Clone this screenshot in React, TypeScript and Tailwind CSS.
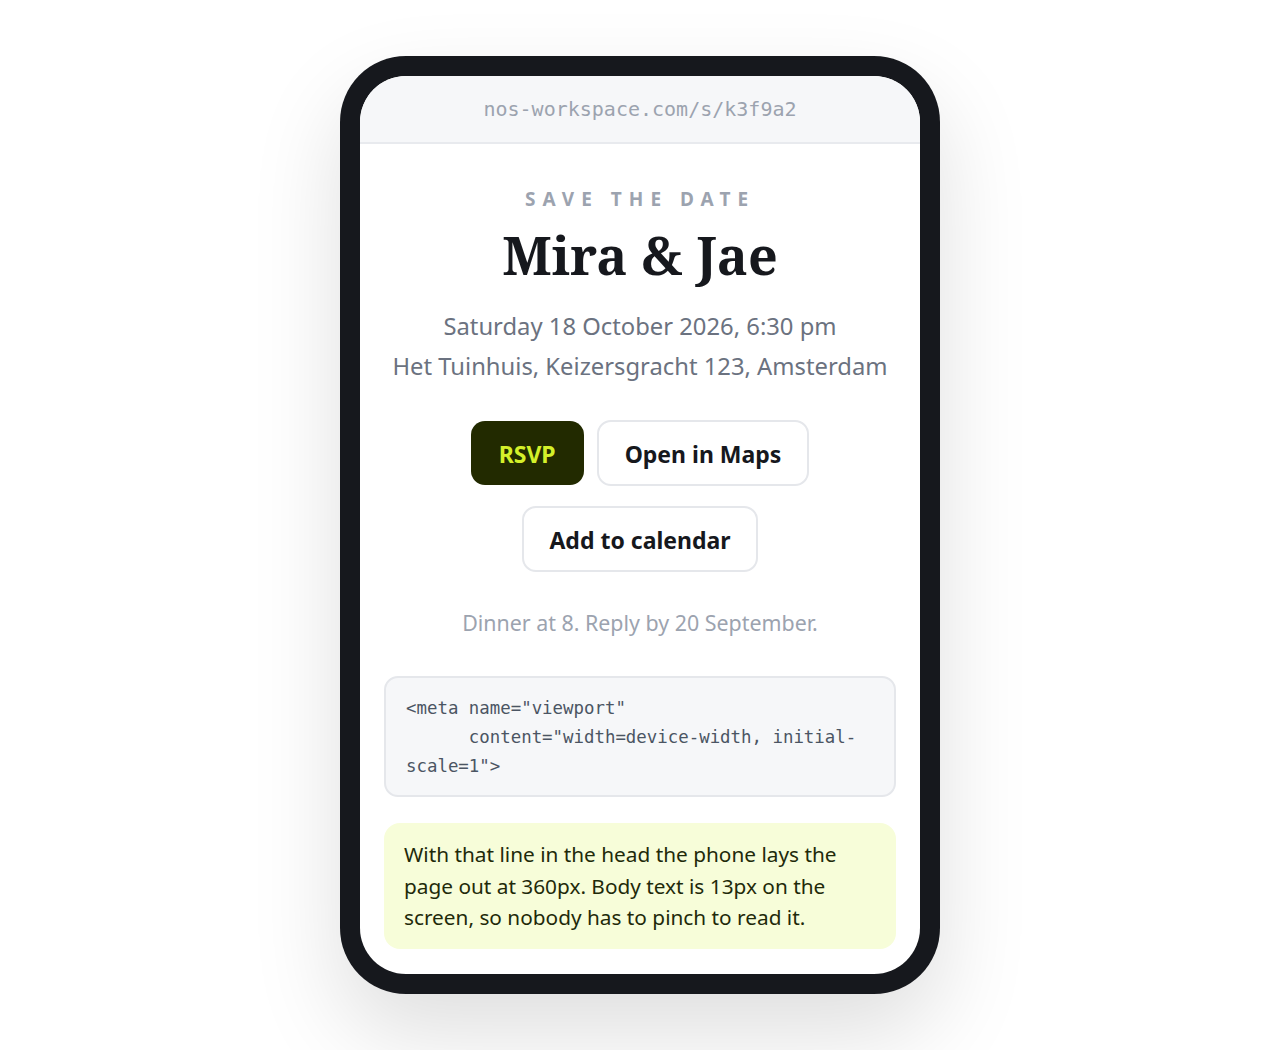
import React from "react";

export default function App() {
  return (
    <div className="min-h-screen w-full bg-white flex justify-center pt-[56px] font-['Noto_Sans',sans-serif]">
      <div className="w-[600px] h-[938px] rounded-[66px] bg-[#16181d] p-[20px] shadow-[0_40px_90px_rgba(0,0,0,0.13)]">
        <div className="h-full rounded-[46px] bg-white overflow-hidden flex flex-col">
          <div className="h-[68px] shrink-0 bg-[#f6f7f9] border-b-2 border-[#e8eaee] flex items-center justify-center">
            <span className="font-['DejaVu_Sans_Mono',monospace] text-[20px] text-[#9ca3af]">
              nos-workspace.com/s/k3f9a2
            </span>
          </div>
          <div className="px-[24px] flex flex-col items-center">
            <div className="mt-[43px] text-[19px] leading-[24px] font-bold tracking-[0.37em] text-[#9ca3af]">
              SAVE THE DATE
            </div>
            <h1 className="mt-[15px] font-['Noto_Serif','DejaVu_Serif',serif] font-bold text-[52px] leading-[57px] text-[#16181d]">
              Mira &amp; Jae
            </h1>
            <div className="mt-[23px] text-center text-[23.8px] leading-[40px] text-[#6b7280]">
              <div>Saturday 18 October 2026, 6:30 pm</div>
              <div>Het Tuinhuis, Keizersgracht 123, Amsterdam</div>
            </div>
            <div className="mt-[34px] flex flex-wrap justify-center items-center gap-x-[13px] gap-y-[20px] w-[470px]">
              <button className="h-[64px] pt-[2px] px-[28px] rounded-[14px] bg-[#222a00] text-[#d4f02a] text-[23px] font-bold">
                RSVP
              </button>
              <button className="h-[66px] pt-[2px] px-[26px] rounded-[14px] bg-white border-2 border-[#e5e7eb] text-[#16181d] text-[23px] font-bold">
                Open in Maps
              </button>
              <button className="h-[66px] pt-[2px] px-[25px] rounded-[14px] bg-white border-2 border-[#e5e7eb] text-[#16181d] text-[23px] font-bold">
                Add to calendar
              </button>
            </div>
            <div className="mt-[36px] text-[21.4px] leading-[30px] text-[#9ca3af]">
              Dinner at 8. Reply by 20 September.
            </div>
            <div className="mt-[38px] w-full rounded-[14px] bg-[#f6f7f9] border-2 border-[#e5e7eb] pt-[16px] pb-[14px] px-[20px]">
              <pre className="font-['DejaVu_Sans_Mono',monospace] text-[17.4px] leading-[29px] text-[#4b5563] whitespace-pre">
{`<meta name="viewport"
      content="width=device-width, initial-
scale=1">`}
              </pre>
            </div>
            <div className="mt-[26px] w-full rounded-[16px] bg-[#f7fdd9] pt-[16px] pb-[15px] px-[20px] text-[20.8px] leading-[31.5px] text-[#1f2a0a]">
              With that line in the head the phone lays the page out at 360px. Body text is 13px on the screen, so nobody has to pinch to read it.
            </div>
          </div>
        </div>
      </div>
    </div>
  );
}
